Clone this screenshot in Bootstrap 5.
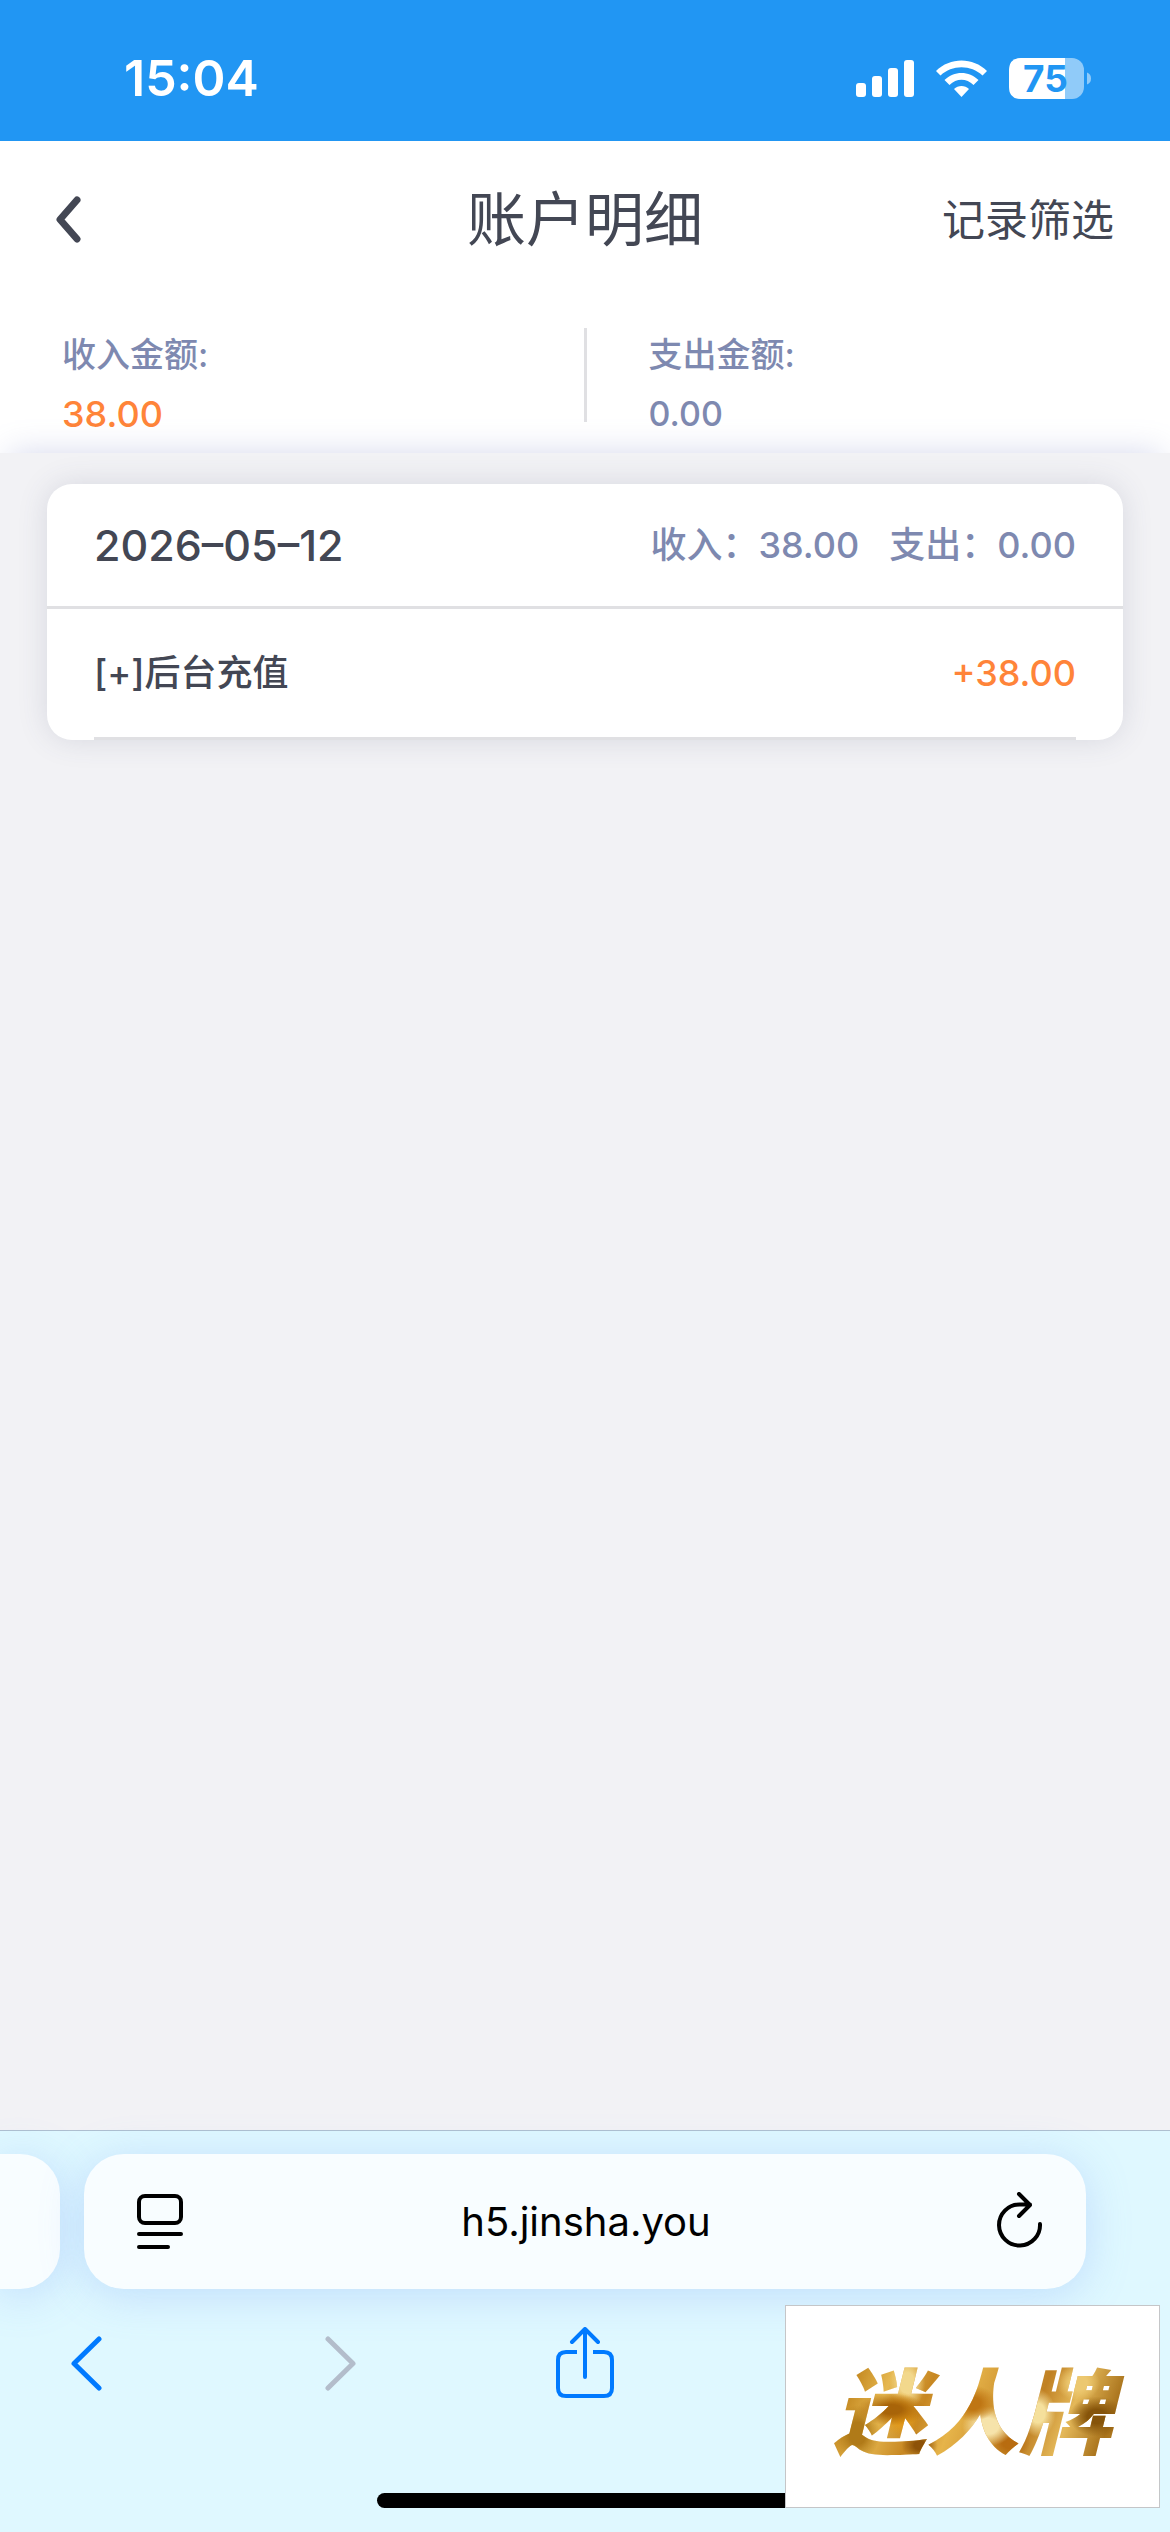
<!DOCTYPE html>
<html lang="zh-CN">
<head>
<meta charset="utf-8">
<meta name="viewport" content="width=device-width, initial-scale=1">
<title>账户明细</title>
<link href="https://cdn.jsdelivr.net/npm/bootstrap@5.3.0/dist/css/bootstrap.min.css" rel="stylesheet">
<style>
:root{--ink:#434754;--slate:#7e89b0;--accent:#ff8439;--line:#e0e0e3;--ios:#007aff}
body{font-family:Inter,"Noto Sans CJK SC",sans-serif;color:var(--ink);background:#f2f2f5}
svg{display:block}
.status-bar{height:141px;background:#2196f3;color:#fff;padding:15px 79px 0 124px}
.clock{font-size:50px;font-weight:600;line-height:60px}
.app-head{height:157px;padding:0 56px}
.app-head h1{font-size:59px;font-weight:400;line-height:72px}
.side{flex:1 1 0}
.btn-plain{display:block;background:none;border:0;padding:0;color:inherit}
.filter{font-size:43px;line-height:60px;color:var(--ink)}
.totals{height:155px;padding-top:30px;background:#fff}
.totals dl{flex:1 1 0;padding-left:62px}
.totals dl+dl{border-left:3px solid var(--line)}
.totals-row{height:94px}
.totals dt{font-size:34px;line-height:54px;font-weight:500;color:var(--slate)}
.totals dd{font-size:34px;line-height:64px;font-weight:500;color:var(--slate)}
.totals dd.gain{font-size:36px}
.totals dd.gain,.gain{color:var(--accent)}
.ledger{padding:31px 47px;box-shadow:0 -10px 30px -10px rgba(126,137,200,.32);position:relative}
.day{border-radius:25px;box-shadow:0 0 30px rgba(67,71,110,.15)}
.day-head{height:125px;padding:0 47px;border-bottom:3px solid var(--line)}
.day-date{font-size:43px;font-weight:500}
.day-sum{font-size:36px;font-weight:500;color:var(--slate);gap:30px}
.entry{height:131px;margin:0 47px;border-bottom:3px solid var(--line);font-size:36px;font-weight:500}
.browser{background:#dff8ff;border-top:1px solid #aebfd0;padding:23px 0 24px;position:relative}
.tabs{gap:24px;padding-right:84px}
.pill{height:135px;border-radius:40px;background:#f8fdff;box-shadow:0 6px 44px rgba(110,150,245,.27)}
.pill-prev{width:60px;border-radius:0 40px 40px 0}
.pill-main{padding:0 43px 0 53px}
.address{flex:1 1 0;min-width:0;border:0;background:none;padding:0 8px 0 0;text-align:center;font-size:40px;color:#000;font-family:Inter,sans-serif}
.tools{display:grid;grid-template-columns:1fr auto 1fr;align-items:start;padding-top:38px;height:204px;color:var(--ios)}
.history{padding:9px 200px 0 71px}
.home{width:416px;height:15px;border-radius:8px;background:#000}
.brand{position:absolute;right:10px;bottom:24px;width:375px;height:203px;background:#fff;border:1px solid #c5c6c8}
.brand span{padding:0 16px;font-family:"Noto Sans CJK SC",sans-serif;font-weight:900;font-style:italic;font-size:93px;line-height:120px;color:transparent;-webkit-background-clip:text;background-clip:text;background-image:
radial-gradient(ellipse 34px 16px at 24% 52%,#a86409 30%,transparent),
radial-gradient(ellipse 20px 22px at 27% 56%,#e59a16 30%,transparent),
radial-gradient(ellipse 22px 28px at 13% 72%,#b07a18 40%,transparent),
radial-gradient(ellipse 18px 14px at 33% 82%,#8d5208 30%,transparent),
radial-gradient(ellipse 18px 26px at 29% 30%,#f2d88c 40%,transparent),
radial-gradient(ellipse 24px 18px at 50% 47%,#bf7614 35%,transparent),
radial-gradient(ellipse 26px 20px at 55% 66%,#f6e3aa 40%,transparent),
radial-gradient(ellipse 20px 16px at 62% 80%,#b86c10 35%,transparent),
radial-gradient(ellipse 18px 24px at 71% 55%,#f5e09c 40%,transparent),
radial-gradient(ellipse 28px 20px at 90% 58%,#86540a 35%,transparent),
radial-gradient(ellipse 22px 18px at 84% 30%,#ecc870 40%,transparent),
linear-gradient(112deg,#a46b12 0,#c58a22 14%,#e6b850 24%,#c78722 36%,#e6b44a 46%,#cf9431 58%,#c08124 68%,#e4b859 78%,#a8721b 90%,#c58f2c 100%)}
</style>
</head>
<body class="d-flex flex-column min-vh-100">
<div class="status-bar d-flex align-items-center justify-content-between">
  <span class="clock">15:04</span>
  <svg width="235" height="41" viewBox="0 0 235 41" fill="#fff" role="img" aria-label="信号 Wi-Fi 电量 75">
    <rect y="25" width="10" height="14" rx="3"/><rect x="16" y="18" width="10" height="21" rx="3"/><rect x="32" y="10" width="10" height="29" rx="3"/><rect x="48" y="2" width="10" height="37" rx="3"/>
    <path d="M80 13C94-1 117-1 131 13L126.500 17.500C115 6.500 96 6.500 84.500 17.500Z"/>
    <path d="M88.500 22C98 12.500 113 12.500 122.500 22L117.500 27C110.500 20 100.500 20 93.500 27Z"/>
    <path d="M98 31C102 27 109 27 113 31L105.500 39Z"/>
    <rect x="153" width="75" height="41" rx="12" opacity=".5"/>
    <path d="M165 0H209V41H165Q153 41 153 29V12Q153 0 165 0Z"/>
    <path d="M231 14.500Q235 16 235 20.500T231 26.500Z" opacity=".5"/>
    <text x="167" y="34" font-family="Inter" font-weight="700" font-size="37" fill="#2196f3">75</text>
  </svg>
</div>
<header class="bg-white">
  <div class="app-head d-flex align-items-center">
    <div class="side"><button class="btn-plain" aria-label="返回"><svg width="25" height="47" viewBox="0 0 25 47" fill="none" stroke="#434754" stroke-width="7" stroke-linecap="round" stroke-linejoin="round"><path d="M21 4L4 23.500L21 43"/></svg></button></div>
    <h1 class="m-0">账户明细</h1>
    <div class="side text-end"><a class="filter text-decoration-none" href="#">记录筛选</a></div>
  </div>
  <div class="totals">
    <div class="totals-row d-flex">
      <dl class="m-0"><dt>收入金额:</dt><dd class="gain m-0">38.00</dd></dl>
      <dl class="m-0"><dt>支出金额:</dt><dd class="m-0">0.00</dd></dl>
    </div>
  </div>
</header>
<main class="ledger flex-grow-1">
  <section class="day bg-white">
    <div class="day-head d-flex align-items-center justify-content-between">
      <span class="day-date">2026–05–12</span>
      <div class="day-sum d-flex"><span>收入：38.00</span><span>支出：0.00</span></div>
    </div>
    <div class="entry d-flex align-items-center justify-content-between">
      <span>[+]后台充值</span><span class="gain">+38.00</span>
    </div>
  </section>
</main>
<footer class="browser">
  <div class="tabs d-flex">
    <div class="pill pill-prev"></div>
    <div class="pill pill-main d-flex align-items-center flex-grow-1">
      <button class="btn-plain" aria-label="页面设置"><svg width="46" height="56" viewBox="0 0 46 56" fill="none" stroke="#000" stroke-width="4" stroke-linecap="round"><rect x="2" y="2" width="42" height="27" rx="6"/><path d="M2 40H44M2 53H31"/></svg></button>
      <input class="address" type="text" value="h5.jinsha.you" aria-label="地址" readonly>
      <button class="btn-plain" aria-label="刷新"><svg width="46" height="60" viewBox="0 0 46 60" fill="none" stroke="#000" stroke-width="4" stroke-linecap="round" stroke-linejoin="round"><path d="M43 32A20.500 20.500 0 1 1 22.500 12.500H33M22 2L33 13L22 24"/></svg></button>
    </div>
  </div>
  <div class="tools">
    <div class="history d-flex justify-content-between">
      <button class="btn-plain" aria-label="后退"><svg width="31" height="55" viewBox="0 0 31 55" fill="none" stroke="currentColor" stroke-width="5" stroke-linecap="round" stroke-linejoin="round"><path d="M28 3L3 27.500L28 52"/></svg></button>
      <button class="btn-plain" aria-label="前进" disabled><svg width="31" height="55" viewBox="0 0 31 55" fill="none" stroke="#b3bdcb" stroke-width="5" stroke-linecap="round" stroke-linejoin="round"><path d="M3 3L28 27.500L3 52"/></svg></button>
    </div>
    <button class="btn-plain" aria-label="分享"><svg width="58" height="72" viewBox="0 0 58 72" fill="none" stroke="currentColor" stroke-width="4" stroke-linecap="round" stroke-linejoin="round"><path d="M29 50V3M16 15L29 2L42 15"/><path stroke-linecap="butt" d="M21 25H10Q2 25 2 33V61Q2 69 10 69H48Q56 69 56 61V33Q56 25 48 25H37"/></svg></button>
  </div>
  <div class="home mx-auto"></div>
  <div class="brand d-flex align-items-center justify-content-center"><span>迷人牌</span></div>
</footer>
<script src="https://cdn.jsdelivr.net/npm/bootstrap@5.3.0/dist/js/bootstrap.bundle.min.js"></script>
</body>
</html>
